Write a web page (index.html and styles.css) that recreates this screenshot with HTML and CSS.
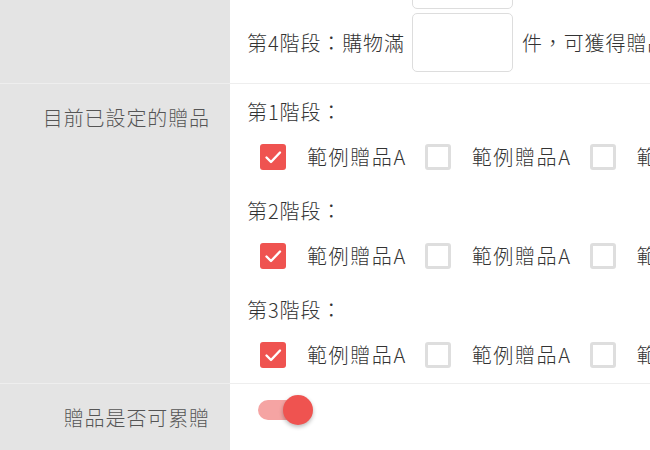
FILE: index.html
```html
<!DOCTYPE html>
<html lang="zh-Hant">
<head>
<meta charset="utf-8">
<title>贈品設定</title>
<link rel="stylesheet" href="styles.css">
</head>
<body>
<div class="page">
  <div class="row">
    <div class="label"></div>
    <div class="content stages">
      <div class="line"><span class="input stub"></span></div>
      <div class="line">第4階段：購物滿<span class="input"></span>件，可獲得贈品</div>
    </div>
  </div>
  <div class="row">
    <div class="label">目前已設定的贈品</div>
    <div class="content gifts">
      <div class="stage">
        <div class="stage-title">第1階段：</div>
        <div class="checks">
          <div class="item"><span class="box checked"><svg viewBox="0 0 26 26"><path d="M6.5 13.5l4.5 4.5 9-9.5"/></svg></span><span class="text">範例贈品A</span></div>
          <div class="item"><span class="box"></span><span class="text">範例贈品A</span></div>
          <div class="item"><span class="box"></span><span class="text">範例贈品A</span></div>
        </div>
      </div>
      <div class="stage">
        <div class="stage-title">第2階段：</div>
        <div class="checks">
          <div class="item"><span class="box checked"><svg viewBox="0 0 26 26"><path d="M6.5 13.5l4.5 4.5 9-9.5"/></svg></span><span class="text">範例贈品A</span></div>
          <div class="item"><span class="box"></span><span class="text">範例贈品A</span></div>
          <div class="item"><span class="box"></span><span class="text">範例贈品A</span></div>
        </div>
      </div>
      <div class="stage">
        <div class="stage-title">第3階段：</div>
        <div class="checks">
          <div class="item"><span class="box checked"><svg viewBox="0 0 26 26"><path d="M6.5 13.5l4.5 4.5 9-9.5"/></svg></span><span class="text">範例贈品A</span></div>
          <div class="item"><span class="box"></span><span class="text">範例贈品A</span></div>
          <div class="item"><span class="box"></span><span class="text">範例贈品A</span></div>
        </div>
      </div>
    </div>
  </div>
  <div class="row">
    <div class="label">贈品是否可累贈</div>
    <div class="content toggle-cell">
      <div class="switch"><span class="track"></span><span class="knob"></span></div>
    </div>
  </div>
</div>
</body>
</html>
```
FILE: styles.css
```css
html, body {
  margin: 0;
  padding: 0;
  background: #ffffff;
  overflow: hidden;
}
body {
  width: 650px;
  height: 450px;
  font-family: "Noto Sans CJK TC", "Noto Sans", sans-serif;
  font-size: 20px;
  font-weight: 300;
  letter-spacing: 0.9px;
  color: #333333;
}
.page {
  margin-top: -61px;
}
.row {
  display: grid;
  grid-template-columns: 230px 1fr;
  border-bottom: 1px solid #eeeeee;
}
.label {
  background: #e4e4e4;
  color: #555555;
  text-align: right;
  padding: 20px 20px 0 0;
  line-height: 28px;
  white-space: nowrap;
}
.content {
  padding-left: 17px;
  overflow: hidden;
  white-space: nowrap;
}
.stages {
  padding-top: 11px;
  padding-bottom: 11px;
  display: flex;
  flex-direction: column;
  gap: 4px;
}
.line {
  display: flex;
  align-items: center;
  height: 59px;
}
.input {
  display: inline-block;
  flex: none;
  width: 99px;
  height: 57px;
  border: 1px solid #dddddd;
  border-radius: 5px;
  margin: 0 9px 0 7px;
  background: #ffffff;
}
.input.stub {
  margin-left: 165px;
}
.gifts {
  padding-top: 14px;
  padding-bottom: 15px;
  display: flex;
  flex-direction: column;
  gap: 27px;
}
.stage-title {
  line-height: 28px;
  height: 28px;
}
.checks {
  margin-top: 18px;
  padding-left: 13px;
  display: flex;
  height: 26px;
  align-items: center;
}
.item {
  display: flex;
  align-items: center;
  margin-right: 18px;
  flex: none;
}
.box {
  width: 26px;
  height: 26px;
  box-sizing: border-box;
  border: 3px solid #dedede;
  border-radius: 3px;
  flex: none;
  display: block;
}
.box.checked {
  background: #ef5350;
  border: none;
}
.box svg {
  display: block;
  width: 26px;
  height: 26px;
}
.box svg path {
  fill: none;
  stroke: #ffffff;
  stroke-width: 2.4;
  stroke-linecap: round;
  stroke-linejoin: round;
}
.text {
  margin-left: 21px;
  line-height: 26px;
  letter-spacing: 1.6px;
}
.toggle-cell {
  padding-top: 11px;
  padding-bottom: 36px;
}
.switch {
  position: relative;
  width: 56px;
  height: 30px;
  margin-left: 11px;
}
.track {
  position: absolute;
  left: 0;
  top: 5px;
  width: 42px;
  height: 20px;
  border-radius: 10px;
  background: #f5a4a3;
}
.knob {
  position: absolute;
  left: 25px;
  top: 0;
  width: 30px;
  height: 30px;
  border-radius: 50%;
  background: #ef5350;
  box-shadow: 0 2px 4px rgba(0, 0, 0, 0.28);
}
```
